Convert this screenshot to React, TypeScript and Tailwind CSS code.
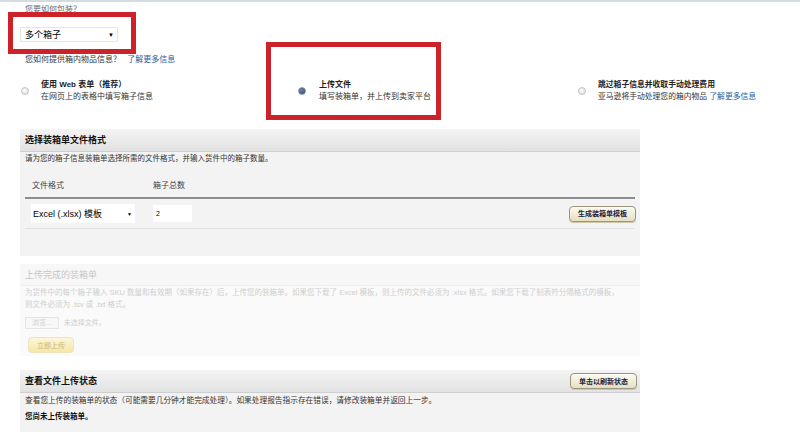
import React from "react";

const FONT = "font-['Liberation_Sans','Noto_Sans_CJK_SC',sans-serif]";

function Radio({ checked }: { checked?: boolean }) {
  return (
    <span
      className={`inline-block w-[8px] h-[8px] rounded-full border shrink-0 ${
        checked
          ? "border-[#8a96a8] bg-[radial-gradient(circle_at_40%_40%,#6f88b0,#2c3f63)]"
          : "border-[#c4c4c4] bg-[radial-gradient(circle_at_40%_40%,#ffffff,#d6d6d6)]"
      }`}
    />
  );
}

function BeigeButton({ children, faded }: { children: React.ReactNode; faded?: boolean }) {
  return (
    <button
      type="button"
      className={`h-[16px] px-[8px] rounded-[4px] border text-[7px] font-bold leading-none ${
        faded
          ? "border-[#efe3b8] bg-gradient-to-b from-[#fdf6d8] to-[#f6e6a8] text-[#d8c890]"
          : "border-[#9c9680] bg-gradient-to-b from-[#fdfbf0] to-[#e6dfc2] text-[#1d2240] shadow-[0_1px_0_#cfc8aa]"
      }`}
    >
      {children}
    </button>
  );
}

function PanelHeader({ children, right }: { children: React.ReactNode; right?: React.ReactNode }) {
  return (
    <div className="h-[23px] flex items-center justify-between pl-[5px] pr-[3px] bg-gradient-to-b from-[#f4f4f4] to-[#e2e2e2] border-b border-[#cfcfcf]">
      <span className="text-[9px] font-bold text-[#111]">{children}</span>
      {right}
    </div>
  );
}

export default function App() {
  return (
    <div className={`relative w-[800px] h-[434px] overflow-hidden bg-white border-t-2 border-[#d3dce2] ${FONT} text-[8px] leading-[10px] text-[#333]`}>
      {/* box quantity */}
      <div className="pl-[25px] pt-[3px] text-[#666]">您要如何包装？</div>
      <div className="ml-[20px] mt-[12px] w-[98px] h-[15px] flex items-center justify-between pl-[4px] pr-[3px] bg-white border border-[#e6e6e6] text-[9px] text-black">
        <span>多个箱子</span>
        <span className="text-[6px]">▼</span>
      </div>

      <div className="pl-[25px] mt-[13px] text-[#333]">
        您如何提供箱内物品信息？ <span className="ml-[4px] text-[#1f5e9e]">了解更多信息</span>
      </div>

      {/* options */}
      <div className="flex pl-[21px] mt-[14px]">
        <div className="w-[277px] flex items-center gap-[12px]">
          <Radio />
          <div className="leading-[12px]">
            <div className="font-bold text-[#222]">使用 Web 表单（推荐）</div>
            <div>在网页上的表格中填写箱子信息</div>
          </div>
        </div>
        <div className="w-[280px] flex items-center gap-[13px]">
          <Radio checked />
          <div className="leading-[12px]">
            <div className="font-bold text-[#222]">上传文件</div>
            <div>填写装箱单，并上传到卖家平台</div>
          </div>
        </div>
        <div className="flex items-center gap-[12px]">
          <Radio />
          <div className="leading-[12px] text-[7.8px]">
            <div className="font-bold text-[#222]">跳过箱子信息并收取手动处理费用</div>
            <div>
              亚马逊将手动处理您的箱内物品 <span className="text-[#1f5e9e]">了解更多信息</span>
            </div>
          </div>
        </div>
      </div>

      {/* panel 1 */}
      <div className="ml-[20px] mt-[26px] w-[620px] h-[127px] bg-[#f3f3f3]">
        <PanelHeader>选择装箱单文件格式</PanelHeader>
        <div className="pl-[5px] pt-[2px] text-[7.5px] text-[#333]">请为您的箱子信息装箱单选择所需的文件格式，并输入货件中的箱子数量。</div>
        <div className="flex pl-[12px] mt-[17px] text-[#444]">
          <span className="w-[121px]">文件格式</span>
          <span>箱子总数</span>
        </div>
        <div className="mx-[5px] mt-[6px] border-t-2 border-[#8c8c8c]" />
        <div className="flex items-center pl-[11px] pr-[4px] mt-[5px] h-[19px]">
          <div className="w-[104px] h-[19px] flex items-center justify-between pl-[2px] pr-[3px] bg-white text-[9px] text-black">
            <span>Excel (.xlsx) 模板</span>
            <span className="text-[5px]">▼</span>
          </div>
          <div className="ml-[18px] w-[39px] h-[17px] flex items-center pl-[3px] bg-white text-[7px] text-black">2</div>
          <div className="ml-auto">
            <BeigeButton>生成装箱单模板</BeigeButton>
          </div>
        </div>
        <div className="mx-[5px] mt-[5px] border-t border-[#e2e2e2]" />
      </div>

      {/* panel 2 (disabled) */}
      <div className="ml-[20px] mt-[8px] w-[620px] h-[92px] bg-[#fafafa] text-[#cfcfcf]">
        <div className="h-[22px] flex items-center pl-[5px] bg-[#f7f7f7] border-b border-[#f0f0f0]">
          <span className="text-[9px] text-[#c8c8c8]">上传完成的装箱单</span>
        </div>
        <div className="pl-[5px] pr-[14px] pt-[1px] leading-[12px] text-[7.5px]">
          为货件中的每个箱子输入 SKU 数量和有效期（如果存在）后，上传您的装箱单。如果您下载了 Excel 模板，则上传的文件必须为 .xlsx 格式。如果您下载了制表符分隔格式的模板，则文件必须为 .tsv 或 .txt 格式。
        </div>
        <div className="flex items-center gap-[5px] pl-[5px] mt-[6px]">
          <span className="h-[12px] px-[6px] flex items-center border border-[#e4e4e4] bg-[#f8f8f8] text-[7px]">浏览...</span>
          <span className="text-[7px]">未选择文件。</span>
        </div>
        <div className="pl-[8px] mt-[8px]">
          <BeigeButton faded>立即上传</BeigeButton>
        </div>
      </div>

      {/* panel 3 */}
      <div className="ml-[20px] mt-[14px] w-[620px] h-[62px] bg-[#f3f3f3]">
        <PanelHeader right={<BeigeButton>单击以刷新状态</BeigeButton>}>查看文件上传状态</PanelHeader>
        <div className="pl-[5px] pt-[3px] text-[7.7px]">查看您上传的装箱单的状态（可能需要几分钟才能完成处理）。如果处理报告指示存在错误，请修改装箱单并返回上一步。</div>
        <div className="pl-[5px] mt-[6px] text-[7.5px] font-bold text-[#111]">您尚未上传装箱单。</div>
      </div>

      {/* red annotation boxes */}
      <div className="absolute left-[8px] top-[10px] w-[128px] h-[42px] border-[5px] border-[#cc2229]" />
      <div className="absolute left-[266px] top-[40px] w-[175px] h-[78px] border-[5px] border-[#cc2229]" />
    </div>
  );
}
